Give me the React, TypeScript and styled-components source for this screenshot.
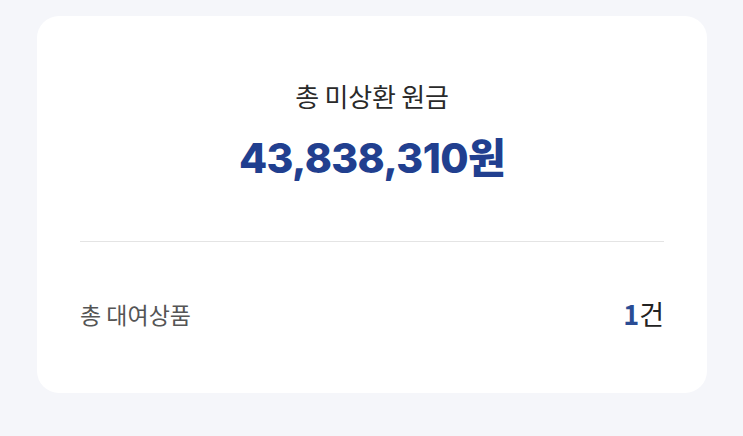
import styled, { createGlobalStyle } from 'styled-components';

const GlobalStyle = createGlobalStyle`
    body {
        margin: 0;
        background: #f5f6fa;
        font-family: 'Noto Sans CJK KR', 'Noto Sans', sans-serif;
    }
`;

export default function App() {
    return (
        <>
            <GlobalStyle />
            <Page>
                <Card>
                    <Summary>
                        <Label>총 미상환 원금</Label>
                        <Amount>43,838,310원</Amount>
                    </Summary>
                    <Divider />
                    <Row>
                        <RowLabel>총 대여상품</RowLabel>
                        <RowValue>
                            <Num>1</Num>건
                        </RowValue>
                    </Row>
                </Card>
            </Page>
        </>
    );
}

const Page = styled.div`
    width: 743px;
    height: 436px;
    padding: 16px 36px 0 37px;
    box-sizing: border-box;
`;

const Card = styled.div`
    width: 670px;
    height: 377px;
    box-sizing: border-box;
    background: #ffffff;
    border-radius: 22px;
    padding: 0 43px;
    display: flex;
    flex-direction: column;
`;

const Summary = styled.div`
    display: flex;
    flex-direction: column;
    align-items: center;
    padding-top: 62px;
    height: 225px;
    box-sizing: border-box;
`;

const Label = styled.div`
    font-size: 26px;
    line-height: 36px;
    color: #2a2a2a;
    letter-spacing: -0.2px;
`;

const Amount = styled.div`
    margin-top: 19px;
    font-family: 'Inter', 'Noto Sans CJK KR', sans-serif;
    font-size: 41px;
    line-height: 50px;
    font-weight: 800;
    color: #213f8f;
    letter-spacing: -0.6px;
`;

const Divider = styled.div`
    height: 1px;
    background: #e4e4e4;
`;

const Row = styled.div`
    display: flex;
    justify-content: space-between;
    align-items: center;
    margin-top: 56px;
`;

const RowLabel = styled.div`
    font-size: 23px;
    line-height: 32px;
    color: #555555;
`;

const RowValue = styled.div`
    font-size: 27px;
    line-height: 32px;
    color: #222222;
`;

const Num = styled.span`
    color: #2a4c94;
    font-weight: 700;
`;
